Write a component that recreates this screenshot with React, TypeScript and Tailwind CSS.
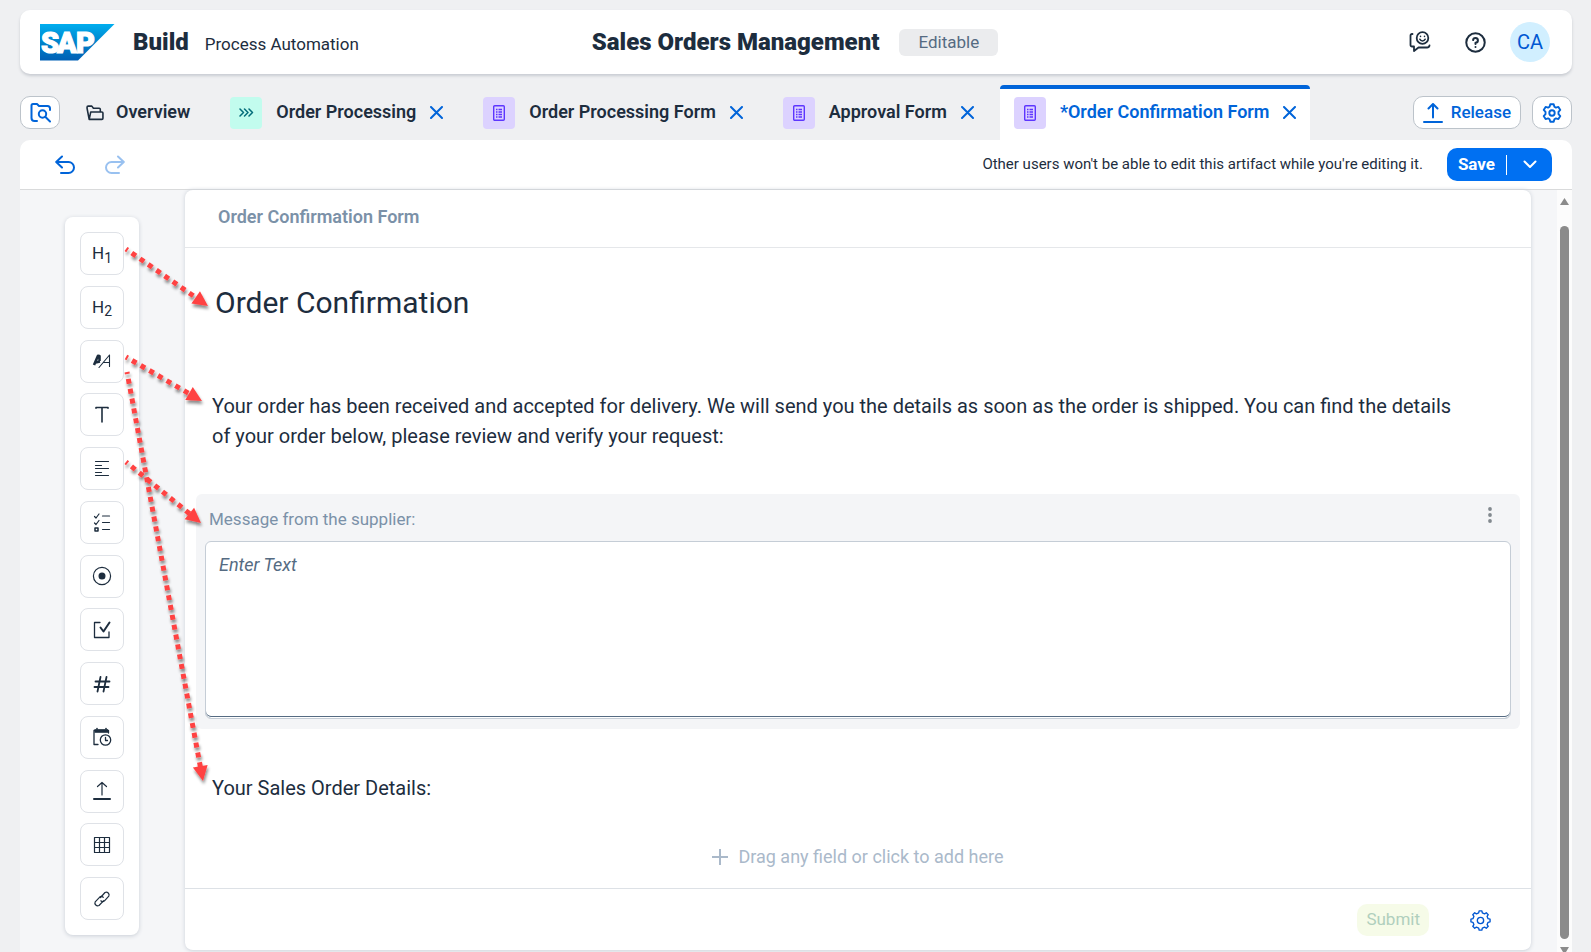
import type { ReactNode } from "react";

const ink = "#1d2d3e";

function Svg({ size, children, stroke = "currentColor", width = 1.5, box = 20 }: { size: number; children: ReactNode; stroke?: string; width?: number; box?: number }) {
  return (
    <svg width={size} height={size} viewBox={`0 0 ${box} ${box}`} fill="none" stroke={stroke} strokeWidth={width} strokeLinecap="round" strokeLinejoin="round" aria-hidden="true" className="shrink-0">
      {children}
    </svg>
  );
}

function SapLogo() {
  return (
    <svg width="75" height="37" viewBox="0 0 75 37" role="img" aria-label="SAP" className="shrink-0">
      <defs>
        <linearGradient id="sap" x1="0" y1="0" x2="0" y2="1">
          <stop offset="0" stopColor="#00aeef" />
          <stop offset="0.5" stopColor="#0083cb" />
          <stop offset="1" stopColor="#0060b5" />
        </linearGradient>
      </defs>
      <path d="M0 0H74.5L38 36.5H0Z" fill="url(#sap)" />
      <g fill="#fff" stroke="#fff" strokeWidth="1.2" fontFamily="Roboto, 'Liberation Sans', sans-serif" fontWeight="900" fontSize="29">
        <text x="1" y="29">S</text>
        <text x="17" y="29">A</text>
        <text x="36" y="29">P</text>
      </g>
    </svg>
  );
}

function gearPath(teeth: number, outer: number, inner: number) {
  const step = (Math.PI * 2) / teeth;
  const points: string[] = [];
  for (let i = 0; i < teeth; i++) {
    const a = i * step - Math.PI / 2;
    [[-0.3, inner], [-0.18, outer], [0.18, outer], [0.3, inner]].forEach(([t, r]) => {
      points.push(`${(10 + Math.cos(a + t * step) * r).toFixed(2)} ${(10 + Math.sin(a + t * step) * r).toFixed(2)}`);
    });
  }
  return `M${points.join("L")}Z`;
}

function SettingsIcon() {
  return (
    <Svg size={20} width={1.9}>
      <path d="M8.3 1.2h3.4l.7 2.5 1.5.9 2.5-.7 1.9 3-1.8 1.9v2.4l1.8 1.9-1.9 3-2.5-.7-1.5.9-.7 2.5H8.3l-.7-2.5-1.5-.9-2.5.7-1.9-3 1.8-1.9V8.8L1.7 6.9l1.9-3 2.5.7 1.5-.9Z" />
      <circle cx="10" cy="10" r="2.7" />
    </Svg>
  );
}

function CloseButton({ label }: { label: string }) {
  return (
    <button type="button" aria-label={`Close ${label}`} className="text-[#0064d9]">
      <svg width="13" height="13" viewBox="0 0 13 13" fill="none" stroke="currentColor" strokeWidth="2" strokeLinecap="round" aria-hidden="true">
        <path d="M1 1L12 12M12 1L1 12" />
      </svg>
    </button>
  );
}

function FormBadge() {
  return (
    <span className="flex h-8 w-8 items-center justify-center rounded bg-[#dcd2ff] text-[#5d36ff]">
      <svg width="12" height="16" viewBox="0 0 12 16" fill="none" stroke="currentColor" aria-hidden="true">
        <rect x="0.7" y="0.7" width="10.6" height="14.6" rx="1" strokeWidth="1.4" />
        <path d="M3 4.5h1.5M5.5 4.5h3.5M3 7h1.5M5.5 7h3.5M3 9.5h1.5M5.5 9.5h3.5M3 12h1.5M5.5 12h3.5" strokeWidth="1.3" />
      </svg>
    </span>
  );
}

function ProcessBadge() {
  return (
    <span className="flex h-8 w-8 items-center justify-center rounded bg-[#c2fcee] text-[#046c7a]">
      <svg width="15" height="9" viewBox="0 0 15 9" fill="none" stroke="currentColor" strokeWidth="1.5" strokeLinecap="round" strokeLinejoin="round" aria-hidden="true">
        <path d="M1 1L4.5 4.5L1 8M5.5 1L9 4.5L5.5 8M10 1L13.5 4.5L10 8" />
      </svg>
    </span>
  );
}

function Tab({ label, badge, active = false }: { label: string; badge: ReactNode; active?: boolean }) {
  const state = active ? "border-[#0064d9] bg-white text-[#0064d9]" : "border-transparent";
  return (
    <div className={`flex h-full items-center gap-[14px] rounded-t border-t-4 px-[14px] pb-1 ${state}`}>
      {badge}
      <a href="#" className="pb-0.5 text-lg font-semibold whitespace-nowrap">{label}</a>
      <CloseButton label={label} />
    </div>
  );
}

const thin = 1.2;

const tools: { name: string; icon: ReactNode }[] = [
  { name: "Headline 1", icon: <span className="text-[17px] leading-5">H<sub className="text-sm">1</sub></span> },
  { name: "Headline 2", icon: <span className="text-[17px] leading-5">H<sub className="text-sm">2</sub></span> },
  {
    name: "Paragraph",
    icon: (
      <Svg size={20}>
        <path d="M2 14L6 4.800L7.500 5V10M3.500 11.500L8 10.500" strokeWidth="2.6" strokeLinecap="butt" />
        <path d="M7 16.5L17.5 4V15.5M11.5 11.5H17.5" strokeWidth="1.1" />
      </Svg>
    ),
  },
  { name: "Text", icon: <Svg size={20} width={1.6}><path d="M4 2.5H16M10 2.5V17M4 2.5V3.2M16 2.5V3.2" /></Svg> },
  { name: "Text Area", icon: <Svg size={20} width={thin}><path d="M3.5 2.5H16.500M3.5 6.500H9.5M3.5 9.5H16.500M3.5 13.500H9.5M3.5 16.500H16.500" /></Svg> },
  {
    name: "Dropdown",
    icon: (
      <Svg size={20} width={thin}>
        <path d="M2.5 4.5L4 6L7 2M2.5 11L4 12.5L7 8.5M10.5 4H17.5M10.5 10.5H17.5M10.5 17.5H17.5" />
        <path d="M3 16H6V19H3Z" strokeWidth="1.5" />
      </Svg>
    ),
  },
  { name: "Choice", icon: <Svg size={20} width={thin}><circle cx="10" cy="10" r="8.6" /><circle cx="10" cy="10" r="2.9" fill={ink} /></Svg> },
  {
    name: "Checkbox",
    icon: (
      <Svg size={20} width={1.3}>
        <path d="M8 2.500H2.5V17.500H17V12" />
        <path d="M8.5 7.5L11.5 11.5L17.5 2.5" strokeWidth="2" />
      </Svg>
    ),
  },
  { name: "Number", icon: <Svg size={20} width={1.8}><path d="M3.5 7.5H17.5M2.5 13H16.5M8.5 3L5.5 17.5M14.5 3L11.5 17.5" /></Svg> },
  {
    name: "Date",
    icon: (
      <Svg size={20} width={1.3}>
        <path d="M6 17.5H2V3.5H16.5V6" />
        <path d="M2.5 4H16" strokeWidth="3.6" strokeLinecap="butt" />
        <path d="M5 1.5V2M14 1.5V2" strokeWidth="1.6" />
        <circle cx="13.5" cy="13" r="5.2" />
        <path d="M13.5 10.5V13.5H15.5" />
      </Svg>
    ),
  },
  {
    name: "File",
    icon: (
      <Svg size={20} width={1.2}>
        <path d="M10 1.5V14M5.5 5.5L10 1.5L14.5 5.5" />
        <path d="M2 18H18" strokeWidth="2" />
      </Svg>
    ),
  },
  { name: "Table", icon: <Svg size={20} width={1.2}><path d="M2.5 2.5H17.5V17.5H2.5ZM2.5 7.5H17.5M2.5 12.5H17.5M7.5 2.5V17.5M12.5 2.5V17.5" /></Svg> },
  {
    name: "Link",
    icon: (
      <Svg size={20} width={1.2}>
        <path d="M8.5 8.5L13 3.500A2.8 2.8 0 0 1 16.8 7.2L12.5 11.8A2.8 2.8 0 0 1 8.8 11.8" />
        <path d="M11.5 11.8L7 16.5A2.8 2.8 0 0 1 3.2 12.8L7.5 8.3A2.8 2.8 0 0 1 11.2 8.3" />
      </Svg>
    ),
  },
];

const arrows = [
  { x1: 126, y1: 249, x2: 208, y2: 306 },
  { x1: 126, y1: 357, x2: 202, y2: 401 },
  { x1: 127, y1: 372, x2: 203, y2: 781 },
  { x1: 126, y1: 462, x2: 201, y2: 523 },
];

function Arrows() {
  return (
    <svg width="240" height="800" viewBox="0 0 240 800" className="pointer-events-none absolute top-0 left-0" fill="none" aria-hidden="true">
      <defs>
        <filter id="shade" x="-20%" y="-20%" width="140%" height="140%">
          <feDropShadow dx="1" dy="3" stdDeviation="1.8" floodColor="#000" floodOpacity="0.45" />
        </filter>
      </defs>
      <g filter="url(#shade)">
        {arrows.map(({ x1, y1, x2, y2 }) => {
          const length = Math.hypot(x2 - x1, y2 - y1);
          const angle = (Math.atan2(y2 - y1, x2 - x1) * 180) / Math.PI;
          return (
            <g key={y2} transform={`translate(${x1} ${y1}) rotate(${angle})`}>
              <path d={`M0 0H${length - 12}`} stroke="#ff4343" strokeWidth="5" strokeDasharray="5 5" strokeDashoffset="3" />
              <path d={`M${length} 0L${length - 15} -7.5V7.5Z`} fill="#ff4343" />
            </g>
          );
        })}
      </g>
    </svg>
  );
}

export default function App() {
  return (
    <div className="relative flex h-screen flex-col overflow-hidden bg-[#eff0f2] pt-[10px] pr-[19px] pl-5 font-[Roboto,'Liberation_Sans',sans-serif] text-[#1d2d3e]">
      <header className="grid shrink-0 grid-cols-[1fr_auto_1fr] items-center rounded-[10px] bg-white py-3 pr-[22px] pl-5 shadow-[0_2px_3px_#c9ccd2]">
        <div className="flex items-center">
          <SapLogo />
          <span className="ml-[18px] text-2xl leading-10 font-black">Build</span>
          <span className="ml-4 pt-1 text-[17px] leading-9">Process Automation</span>
        </div>
        <div className="flex items-center gap-5">
          <h1 className="text-2xl leading-10 font-black">Sales Orders Management</h1>
          <span className="rounded-md bg-[#ebecee] px-[19px] text-[17px] leading-[27px] text-[#556b82]">Editable</span>
        </div>
        <div className="flex items-center justify-end">
          <button type="button" aria-label="Feedback">
            <Svg size={22} width={1.8} box={22}>
              <path d="M3.5 3H3A1.5 1.5 0 0 0 1.5 4.5V14A1.5 1.5 0 0 0 3 15.5H5V20L9.5 16.5H18A2.5 2.5 0 0 0 20.5 14.5" />
              <circle cx="13.5" cy="7" r="5.8" />
              <path d="M10.8 8.2A3 3 0 0 0 16.2 8.2M11.5 5.2V5.4M15.5 5.2V5.4" strokeWidth="1.5" />
            </Svg>
          </button>
          <button type="button" aria-label="Help" className="ml-[34px]">
            <Svg size={21} width={1.9}>
              <circle cx="10" cy="10" r="8.8" />
              <path d="M7.7 7.7A2.3 2.3 0 1 1 10 10.2V11.5M10 14.3V14.4" />
            </Svg>
          </button>
          <button type="button" className="ml-6 h-10 w-10 rounded-full bg-[#d1efff] text-[20px] text-[#0057d2]">CA</button>
        </div>
      </header>

      <nav aria-label="Artifacts" className="mt-[11px] flex h-[55px] shrink-0 items-center">
        <button type="button" aria-label="Browse artifacts" className="flex h-[33px] w-10 items-center justify-center rounded-[10px] border border-[#bcc3ca] bg-white text-[#0064d9]">
          <Svg size={21} width={2} box={21}>
            <path d="M7 19H4.5A3 3 0 0 1 1.5 16V3.5A1.5 1.5 0 0 1 3 2H7L9 4H17.5A2.5 2.5 0 0 1 20 6.5V8" />
            <circle cx="12.5" cy="12" r="3.7" />
            <path d="M15.5 15L20 19.5" />
          </Svg>
        </button>
        <div className="ml-3 flex h-full items-center gap-3">
          <div className="flex h-full items-center gap-3 border-t-4 border-transparent px-[14px] pb-1">
            <Svg size={18} width={1.5} box={17}>
              <path d="M3 14.5L1 4V3A1 1 0 0 1 2 2H5.5L7 4H12.5A1 1 0 0 1 13.5 5V6.5M3 14.5L4.5 7.500H15A1 1 0 0 1 16 8.5V13.500A1 1 0 0 1 15 14.5Z" />
            </Svg>
            <a href="#" className="pb-0.5 text-lg font-semibold">Overview</a>
          </div>
          <Tab label="Order Processing" badge={<ProcessBadge />} />
          <Tab label="Order Processing Form" badge={<FormBadge />} />
          <Tab label="Approval Form" badge={<FormBadge />} />
          <Tab label="*Order Confirmation Form" badge={<FormBadge />} active />
        </div>
        <div className="ml-auto flex items-center gap-[11px] text-[#0064d9]">
          <button type="button" className="flex h-[33px] items-center gap-2 rounded-[10px] border border-[#bcc3ca] bg-white px-[9px] text-[17px] font-medium">
            <Svg size={20} width={2}>
              <path d="M10 1V14.5M5.5 5.5L10 1L14.5 5.5M1 19H19" />
            </Svg>
            Release
          </button>
          <button type="button" aria-label="Project settings" className="flex h-[33px] w-10 items-center justify-center rounded-[10px] border border-[#bcc3ca] bg-white">
            <SettingsIcon />
          </button>
        </div>
      </nav>

      <div className="flex h-[50px] shrink-0 items-center rounded-t-[10px] border-b border-[#d9dadb] bg-white pr-5 pl-[35px]">
        <button type="button" aria-label="Undo" className="text-[#0064d9]">
          <Svg size={20} width={2}>
            <path d="M7 1.5L1.2 7L7 12.5M1.5 7H13.5A5.5 5.5 0 0 1 13.5 18H6" />
          </Svg>
        </button>
        <button type="button" aria-label="Redo" disabled className="ml-[30px] text-[#99c1f0]">
          <Svg size={20} width={2}>
            <path d="M13 1.5L18.8 7L13 12.5M18.5 7H6.5A5.5 5.5 0 0 0 6.5 18H14" />
          </Svg>
        </button>
        <p className="ml-auto text-[15px]">Other users won't be able to edit this artifact while you're editing it.</p>
        <div className="ml-6 flex h-[33px] items-center rounded-[10px] bg-[#0070f2] text-[17px] font-bold text-white">
          <button type="button" className="h-full px-[11px]">Save</button>
          <span className="h-5 w-px bg-white" />
          <button type="button" aria-label="More save options" className="flex h-full w-[45px] items-center justify-center">
            <svg width="14" height="9" viewBox="0 0 14 9" fill="none" stroke="currentColor" strokeWidth="2" strokeLinecap="round" strokeLinejoin="round" aria-hidden="true">
              <path d="M1.5 1.5L7 7L12.5 1.5" />
            </svg>
          </button>
        </div>
      </div>

      <main className="flex min-h-0 flex-1 items-start bg-[#f5f6f8] pl-[45px]">
        <aside aria-label="Form fields" className="mt-[27px] flex h-[718px] w-[74px] shrink-0 flex-col items-center justify-between rounded-lg bg-white py-[15px] shadow-[0_1px_4px_#c9ced6]">
          {tools.map(({ name, icon }) => (
            <button key={name} type="button" aria-label={name} className="flex h-[43px] w-11 items-center justify-center rounded-lg border border-[#dfe2e7]">
              {icon}
            </button>
          ))}
        </aside>

        <section className="ml-[46px] min-w-0 flex-1 rounded-lg border-b border-[#dde1e6] bg-white shadow-[0_0_4px_#ccd1d9]">
          <h2 className="border-b border-[#e5e7ea] px-[33px] pt-[11px] pb-[15px] text-lg leading-[31px] font-semibold text-[#7b91a8]">Order Confirmation Form</h2>
          <div className="flex flex-col px-[11px] text-xl leading-[30px]">
            <h3 className="mt-[35px] px-[19px] text-3xl leading-10">Order Confirmation</h3>
            <p className="mt-[68px] pr-14 pl-4">
              Your order has been received and accepted for delivery. We will send you the details as soon as the order is shipped. You can find the details of your order below, please review and verify your request:
            </p>
            <div className="mt-[43px] flex flex-col rounded-md bg-[#f4f5f7] px-[9px] pb-[10px]">
              <div className="flex items-start justify-between pr-4 pl-1">
                <label htmlFor="message" className="pt-1 text-[17px] leading-[43px] text-[#7b91a8]">Message from the supplier:</label>
                <button type="button" aria-label="Field options" className="mt-3 flex py-px text-[#82898f]">
                  <svg width="10" height="16" viewBox="0 0 10 16" fill="currentColor" aria-hidden="true">
                    <circle cx="5" cy="2" r="1.9" />
                    <circle cx="5" cy="8" r="1.9" />
                    <circle cx="5" cy="14" r="1.9" />
                  </svg>
                </button>
              </div>
              <textarea
                id="message"
                placeholder="Enter Text"
                className="h-[178px] resize-none rounded-md border border-[#c5cdd6] bg-white px-[13px] py-2 text-lg leading-[30px] shadow-[inset_0_-1px_#ffffff,inset_0_-2px_#556b82] placeholder:text-[#556b82] placeholder:italic"
              />
            </div>
            <p className="mt-11 pl-4">Your Sales Order Details:</p>
            <button type="button" className="mt-[42px] mb-[19px] flex items-center gap-[10px] self-center text-lg leading-6 text-[#aab9ca]">
              <svg width="16" height="16" viewBox="0 0 16 16" fill="none" stroke="currentColor" strokeWidth="2" aria-hidden="true">
                <path d="M8 0V16M0 8H16" />
              </svg>
              Drag any field or click to add here
            </button>
          </div>
          <footer className="flex items-center justify-end gap-[41px] border-t border-[#dde1e6] px-10 pt-[15px] pb-[14px]">
            <button type="button" className="h-8 rounded-[10px] bg-[#f6fbe8] px-[9px] text-[17px] text-[#b0cfbd]">Submit</button>
            <button type="button" aria-label="Submit settings" className="text-[#0057d2]">
              <Svg size={21} width={1.3}>
                <path d={gearPath(8, 9.2, 7.4)} />
                <circle cx="10" cy="10" r="3" />
              </Svg>
            </button>
          </footer>
        </section>

        <div className="ml-[26px] flex w-[15px] shrink-0 flex-col items-center self-stretch bg-[#fcfcfc] pt-2" aria-hidden="true">
          <svg width="9" height="7" viewBox="0 0 9 7" fill="#8b8b8b"><path d="M4.5 0L9 7H0Z" /></svg>
          <div className="mt-[21px] mb-2 w-[9px] flex-1 rounded-full bg-[#8b8b8b]" />
          <svg width="9" height="5" viewBox="0 0 9 5" fill="#8b8b8b"><path d="M0 0H9L6 5H3Z" /></svg>
        </div>
      </main>

      <Arrows />
    </div>
  );
}
